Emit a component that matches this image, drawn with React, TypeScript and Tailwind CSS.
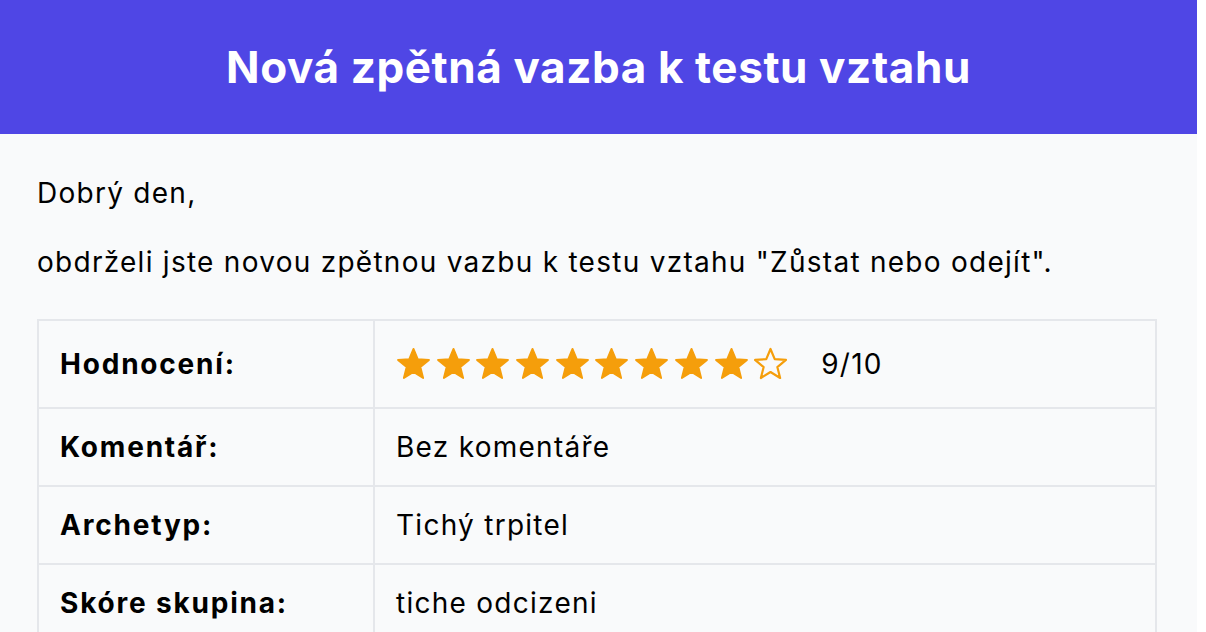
import React from "react";

const Star = ({ filled }: { filled: boolean }) => (
  <svg width="35" height="34" viewBox="0 0 24 23" className="shrink-0">
    <path
      d="M12 1.2 L14.9 8.2 L22.6 8.7 L16.7 13.6 L18.6 21.1 L12 17 L5.4 21.1 L7.3 13.6 L1.4 8.7 L9.1 8.2 Z"
      fill={filled ? "#f59e0b" : "none"}
      stroke="#f59e0b"
      strokeWidth={filled ? 1.3 : 1.5}
      strokeLinejoin="round"
    />
  </svg>
);

const rows: { label: string; value: React.ReactNode; tall?: boolean }[] = [
  {
    label: "Hodnocení:",
    tall: true,
    value: (
      <div className="flex items-center">
        <div className="flex gap-[4.7px]">
          {Array.from({ length: 10 }).map((_, i) => (
            <Star key={i} filled={i < 9} />
          ))}
        </div>
        <span className="ml-[33px]">9/10</span>
      </div>
    ),
  },
  { label: "Komentář:", value: "Bez komentáře" },
  { label: "Archetyp:", value: "Tichý trpitel" },
  { label: "Skóre skupina:", value: "tiche odcizeni" },
];

export default function App() {
  return (
    <div className="min-h-screen bg-white" style={{ fontFamily: "Inter, 'Noto Sans', sans-serif" }}>
      <div className="w-[1197px] bg-[#f9fafb] min-h-[632px]">
        <header className="h-[134px] bg-[#4f46e5] flex items-center justify-center">
          <h1 className="text-white font-bold text-[44px] tracking-[0.6px]">Nová zpětná vazba k testu vztahu</h1>
        </header>
        <main className="pl-[37px] pr-[40px] pt-[38px] text-[28px] tracking-[1.27px] text-black">
          <p className="leading-[42px]">Dobrý den,</p>
          <p className="leading-[42px] mt-[27px]">obdrželi jste novou zpětnou vazbu k testu vztahu "Zůstat nebo odejít".</p>
          <table className="mt-[36px] w-full border-collapse border-2 border-[#e5e7eb]">
            <tbody>
              {rows.map((r) => (
                <tr key={r.label}>
                  <td className={`w-[336px] border-2 border-[#e5e7eb] px-[21px] font-bold tracking-[1.8px] ${r.tall ? "h-[88px]" : "h-[78px]"}`}>
                    {r.label}
                  </td>
                  <td className={`border-2 border-[#e5e7eb] px-[21px] ${r.tall ? "h-[88px]" : "h-[78px]"}`}>{r.value}</td>
                </tr>
              ))}
            </tbody>
          </table>
        </main>
      </div>
    </div>
  );
}
